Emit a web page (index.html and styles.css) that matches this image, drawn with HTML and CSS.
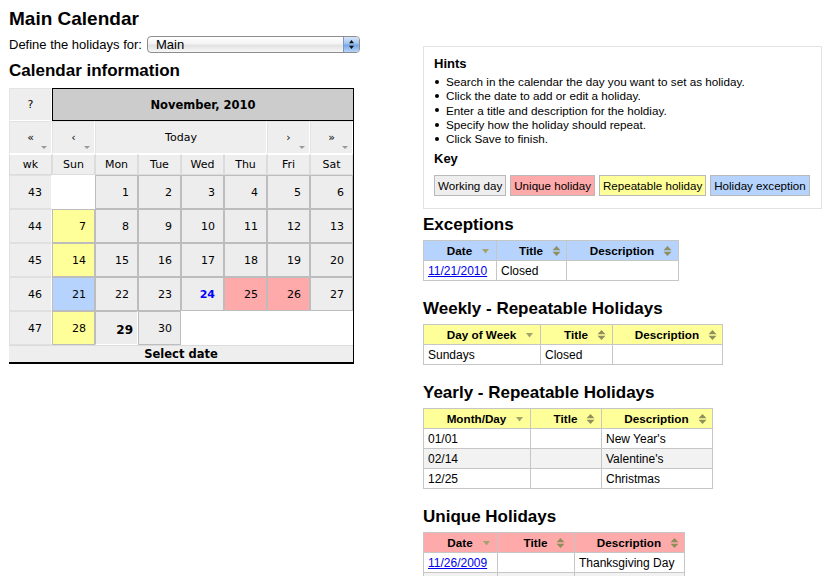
FILE: index.html
```html
<!DOCTYPE html>
<html>
<head>
<meta charset="utf-8">
<title>Main Calendar</title>
<link rel="stylesheet" href="styles.css">
</head>
<body>
<div class="page">
  <div class="left">
    <h1 class="main-title">Main Calendar</h1>
    <div class="define">
      <span>Define the holidays for:</span>
      <div class="select">
        <span class="select-text">Main</span>
        <span class="select-btn">
          <svg width="5" height="9" viewBox="0 0 5 9"><path d="M2.5 0L5 3.2H0z M0 5.8h5L2.5 9z" fill="#111"/></svg>
        </span>
      </div>
    </div>
    <h2 class="sub first-sub">Calendar information</h2>
    <table class="cal">
      <colgroup><col class="c"><col class="c"><col class="c"><col class="c"><col class="c"><col class="c"><col class="c"><col class="c"></colgroup>
      <tr class="title-row"><td class="help">?</td><td class="title" colspan="7">November, 2010</td></tr>
      <tr class="nav-row"><td class="nav drop">«</td><td class="nav drop">‹</td><td class="nav" colspan="4">Today</td><td class="nav drop">›</td><td class="nav drop">»</td></tr>
      <tr class="names"><td>wk</td><td>Sun</td><td>Mon</td><td>Tue</td><td>Wed</td><td>Thu</td><td>Fri</td><td>Sat</td></tr>
      <tr class="week"><td class="wk">43</td><td class="empty"></td><td class="day">1</td><td class="day">2</td><td class="day">3</td><td class="day">4</td><td class="day">5</td><td class="day">6</td></tr>
      <tr class="week"><td class="wk">44</td><td class="day rep">7</td><td class="day">8</td><td class="day">9</td><td class="day">10</td><td class="day">11</td><td class="day">12</td><td class="day">13</td></tr>
      <tr class="week"><td class="wk">45</td><td class="day rep">14</td><td class="day">15</td><td class="day">16</td><td class="day">17</td><td class="day">18</td><td class="day">19</td><td class="day">20</td></tr>
      <tr class="week"><td class="wk">46</td><td class="day exc">21</td><td class="day">22</td><td class="day">23</td><td class="day sel">24</td><td class="day uniq">25</td><td class="day uniq">26</td><td class="day">27</td></tr>
      <tr class="week last"><td class="wk">47</td><td class="day rep">28</td><td class="day today">29</td><td class="day">30</td><td class="blank" colspan="4"></td></tr>
      <tr class="foot"><td colspan="8">Select date</td></tr>
    </table>
  </div>

  <div class="right">
    <div class="hints">
      <h3 class="hint-title">Hints</h3>
      <ul class="hint-list">
        <li>Search in the calendar the day you want to set as holiday.</li>
        <li>Click the date to add or edit a holiday.</li>
        <li>Enter a title and description for the holdiay.</li>
        <li>Specify how the holiday should repeat.</li>
        <li>Click Save to finish.</li>
      </ul>
      <h3 class="hint-title key-title">Key</h3>
      <div class="keys">
        <span class="key k-work">Working day</span>
        <span class="key k-uniq">Unique holiday</span>
        <span class="key k-rep">Repeatable holiday</span>
        <span class="key k-exc">Holiday exception</span>
      </div>
    </div>

    <h2 class="sub sec first-sec">Exceptions</h2>
    <table class="grid blue t-exc">
      <colgroup><col class="w73"><col class="w70"><col class="w112"></colgroup>
      <tr><th>Date<svg class="sort-down" width="9" height="5" viewBox="0 0 9 5"><path d="M1 0h7L4.5 4.5z" fill="#a3a36e"/></svg></th><th>Title<svg class="sort-both" width="9" height="10" viewBox="0 0 9 10"><path d="M4.5 0L8.5 4.2H0.5z M0.5 5.8h8L4.5 10z" fill="#8f8f5e"/></svg></th><th>Description<svg class="sort-both" width="9" height="10" viewBox="0 0 9 10"><path d="M4.5 0L8.5 4.2H0.5z M0.5 5.8h8L4.5 10z" fill="#8f8f5e"/></svg></th></tr>
      <tr><td><a href="#">11/21/2010</a></td><td>Closed</td><td></td></tr>
    </table>

    <h2 class="sub sec">Weekly - Repeatable Holidays</h2>
    <table class="grid yellow t-week">
      <colgroup><col class="w117"><col class="w72"><col class="w110"></colgroup>
      <tr><th>Day of Week<svg class="sort-down" width="9" height="5" viewBox="0 0 9 5"><path d="M1 0h7L4.5 4.5z" fill="#a3a36e"/></svg></th><th>Title<svg class="sort-both" width="9" height="10" viewBox="0 0 9 10"><path d="M4.5 0L8.5 4.2H0.5z M0.5 5.8h8L4.5 10z" fill="#8f8f5e"/></svg></th><th>Description<svg class="sort-both" width="9" height="10" viewBox="0 0 9 10"><path d="M4.5 0L8.5 4.2H0.5z M0.5 5.8h8L4.5 10z" fill="#8f8f5e"/></svg></th></tr>
      <tr><td>Sundays</td><td>Closed</td><td></td></tr>
    </table>

    <h2 class="sub sec">Yearly - Repeatable Holidays</h2>
    <table class="grid yellow t-year">
      <colgroup><col class="w107"><col class="w71"><col class="w111"></colgroup>
      <tr><th>Month/Day<svg class="sort-down" width="9" height="5" viewBox="0 0 9 5"><path d="M1 0h7L4.5 4.5z" fill="#a3a36e"/></svg></th><th>Title<svg class="sort-both" width="9" height="10" viewBox="0 0 9 10"><path d="M4.5 0L8.5 4.2H0.5z M0.5 5.8h8L4.5 10z" fill="#8f8f5e"/></svg></th><th>Description<svg class="sort-both" width="9" height="10" viewBox="0 0 9 10"><path d="M4.5 0L8.5 4.2H0.5z M0.5 5.8h8L4.5 10z" fill="#8f8f5e"/></svg></th></tr>
      <tr><td>01/01</td><td></td><td>New Year's</td></tr>
      <tr class="odd"><td>02/14</td><td></td><td>Valentine's</td></tr>
      <tr><td>12/25</td><td></td><td>Christmas</td></tr>
    </table>

    <h2 class="sub sec">Unique Holidays</h2>
    <table class="grid pink t-uniq">
      <colgroup><col class="w74"><col class="w77"><col class="w110"></colgroup>
      <tr><th>Date<svg class="sort-down" width="9" height="5" viewBox="0 0 9 5"><path d="M1 0h7L4.5 4.5z" fill="#a3a36e"/></svg></th><th>Title<svg class="sort-both" width="9" height="10" viewBox="0 0 9 10"><path d="M4.5 0L8.5 4.2H0.5z M0.5 5.8h8L4.5 10z" fill="#8f8f5e"/></svg></th><th>Description<svg class="sort-both" width="9" height="10" viewBox="0 0 9 10"><path d="M4.5 0L8.5 4.2H0.5z M0.5 5.8h8L4.5 10z" fill="#8f8f5e"/></svg></th></tr>
      <tr><td><a href="#">11/26/2009</a></td><td></td><td>Thanksgiving Day</td></tr>
      <tr class="odd"><td></td><td></td><td></td></tr>
    </table>
  </div>
</div>
</body>
</html>
```

FILE: styles.css
```css
html, body {
  margin: 0;
  padding: 0;
  background: #fff;
}
body {
  font-family: "Liberation Sans", Arial, sans-serif;
  color: #000;
}
.page {
  display: flex;
  align-items: flex-start;
  padding-left: 9px;
}
.left {
  width: 414px;
  flex: none;
}
.right {
  padding-top: 46px;
}

/* headings */
.main-title {
  font-size: 19px;
  line-height: 22px;
  font-weight: bold;
  margin: 8px 0 0;
}
.sub {
  font-size: 17px;
  line-height: 20px;
  font-weight: bold;
  margin: 0;
}
.first-sub {
  margin: 8px 0 7px;
}
.sec {
  margin: 18px 0 5px;
}
.first-sec {
  margin-top: 6px;
}

/* define row */
.define {
  display: flex;
  align-items: center;
  gap: 5px;
  margin-top: 6px;
  height: 17px;
  font-size: 13px;
  line-height: 17px;
}
.select {
  width: 213px;
  height: 17px;
  box-sizing: border-box;
  border: 1px solid #8d8d8d;
  border-radius: 4px;
  display: flex;
  overflow: hidden;
  background: linear-gradient(#ffffff, #f3f3f3 45%, #e2e2e2 55%, #f7f7f7);
}
.select-text {
  flex: 1;
  padding-left: 8px;
  font-size: 13px;
  line-height: 15px;
}
.select-btn {
  width: 15px;
  border-left: 1px solid #7d98c4;
  background: linear-gradient(#d7e6fa, #9dc0ee 48%, #74a4e6 52%, #b8d5f6);
  display: flex;
  align-items: center;
  justify-content: center;
}

/* calendar */
.cal {
  border-collapse: separate;
  border-spacing: 0;
  table-layout: fixed;
  width: 345px;
  border-right: 1px solid #000;
  border-bottom: 2px solid #000;
  font-family: "DejaVu Sans", Tahoma, sans-serif;
  font-size: 11px;
}
.cal col.c {
  width: 43px;
}
.cal td {
  box-sizing: border-box;
  padding: 0;
  text-align: center;
  vertical-align: middle;
}
.cal .help {
  height: 33px;
  background: #eee;
  border: 1px solid #e4e4e4;
  border-right-color: #fff;
  border-bottom-color: #fff;
}
.cal .title {
  height: 33px;
  background: #ccc;
  border: 1px solid #000;
  border-right: 0;
  font-weight: bold;
  font-size: 11.5px;
}
.cal .nav {
  height: 33px;
  background: #eee;
  border: 1px solid #e2e2e2;
  border-right-color: #fff;
  border-bottom-color: #fff;
  position: relative;
}
.cal .nav.drop::after {
  content: "";
  position: absolute;
  right: 4px;
  bottom: 4px;
  border-left: 3px solid transparent;
  border-right: 3px solid transparent;
  border-top: 3px solid #9a9a9a;
}
.cal .names td {
  height: 21px;
  background: #eee;
  border: 1px solid #dcdcdc;
  border-top-color: #fff;
}
.cal .week td {
  height: 34px;
}
.cal .wk {
  background: #eee;
  border: 1px solid #e0e0e0;
  border-right-color: #fff;
  text-align: right;
  padding-right: 9px;
}
.cal .empty {
  background: #fff;
  border: 1px solid #fff;
}
.cal .day {
  background: #ededed;
  border: 1px solid #bdbdbd;
  text-align: right;
  padding-right: 8px;
}
.cal .day.rep {
  background: #ffff99;
}
.cal .day.uniq {
  background: #ffaaaa;
}
.cal .day.exc {
  background: #b5d3fd;
}
.cal .day.sel {
  color: #0000ff;
  font-weight: bold;
}
.cal .day.today {
  font-weight: bold;
  font-size: 12px;
  padding-right: 4px;
  padding-top: 3px;
  border-right-color: #fff;
  border-bottom-color: #fff;
}
.cal .blank {
  background: #fff;
}
.cal .foot td {
  height: 17px;
  background: #eee;
  border-top: 1px solid #dcdcdc;
  font-weight: bold;
  font-size: 11.5px;
}

/* hints */
.hints {
  width: 399px;
  box-sizing: border-box;
  border: 1px solid #e2e2e2;
  padding: 9px 10px 12px;
}
.hint-title {
  font-size: 13px;
  line-height: 16px;
  font-weight: bold;
  margin: 0;
}
.hint-list {
  list-style: none;
  margin: 3px 0 0;
  padding: 0;
  font-size: 11.7px;
  line-height: 14.25px;
}
.hint-list li::before {
  content: "";
  display: inline-block;
  width: 4px;
  height: 4px;
  border-radius: 50%;
  background: #000;
  margin: 0 7px 2px 1px;
  vertical-align: middle;
}
.key-title {
  margin-top: 5px;
}
.keys {
  display: flex;
  gap: 4px;
  margin-top: 8px;
}
.key {
  flex: none;
  white-space: nowrap;
  font-size: 11.6px;
  line-height: 19px;
  padding: 0 3px;
  border: 1px solid #b9b9b9;
}
.k-work { background: #eeeeee; }
.k-uniq { background: #ffaaaa; }
.k-rep { background: #ffff99; }
.k-exc { background: #b5d3fd; }

/* data tables */
.grid {
  border-collapse: collapse;
  table-layout: fixed;
  font-size: 12px;
}
.t-exc { width: 256px; }
.t-week { width: 299px; }
.t-year { width: 289px; }
.t-uniq { width: 261px; }
.w70 { width: 70px; }
.w71 { width: 71px; }
.w72 { width: 72px; }
.w73 { width: 73px; }
.w74 { width: 74px; }
.w77 { width: 77px; }
.w107 { width: 107px; }
.w110 { width: 110px; }
.w111 { width: 111px; }
.w112 { width: 112px; }
.w117 { width: 117px; }
.grid th,
.grid td {
  border: 1px solid #c6c6c6;
  height: 19px;
  padding: 0 3px 0 4px;
  white-space: nowrap;
  vertical-align: middle;
}
.grid th {
  padding: 0 3px 0 20px;
  text-align: center;
  font-weight: bold;
  font-size: 11.7px;
}
.grid td {
  text-align: left;
}
.grid th svg {
  margin-left: 9px;
  vertical-align: middle;
}
.grid th .sort-down {
  margin-top: -2px;
}
.grid th .sort-both {
  margin-top: -2px;
}
.grid.blue th { background: #b5d3fd; }
.grid.yellow th { background: #ffff99; }
.grid.pink th { background: #ffaaaa; }
.grid tr.odd td { background: #f2f2f2; }
.grid a {
  color: #0000ee;
  text-decoration: underline;
}
```
